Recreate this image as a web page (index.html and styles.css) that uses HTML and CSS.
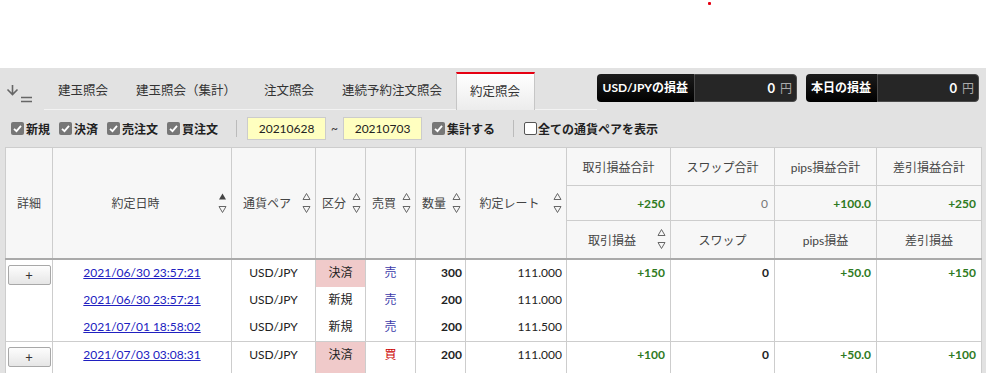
FILE: index.html
```html
<!DOCTYPE html>
<html lang="ja">
  <head>
    <meta charset="UTF-8" />
    <title>約定照会</title>
    <link rel="stylesheet" href="styles.css">
  </head>
  <body>
    <div class="top"><span class="dot"></span></div>

    <div class="panel">
      <div class="tabbar">
        <div class="dl-icon">
          <svg viewBox="0 0 28 20" width="28" height="20">
            <path d="M6.5 1 V10 M1.5 5.5 L6.5 10.5 L11.5 5.5" fill="none" stroke="#666" stroke-width="1.6" />
            <path d="M15 13.5 H26 M15 17.5 H26" stroke="#666" stroke-width="1.6" />
          </svg>
        </div>
        <div class="tabs">
          <div class="tab">建玉照会</div>
          <div class="tab">建玉照会（集計）</div>
          <div class="tab">注文照会</div>
          <div class="tab">連続予約注文照会</div>
          <div class="tab active">約定照会</div>
        </div>
        <div class="pnl">
          <div class="pnl-label">USD/JPYの損益</div>
          <div class="pnl-value pnl-wide"><b>0</b><span>円</span></div>
        </div>
        <div class="pnl">
          <div class="pnl-label">本日の損益</div>
          <div class="pnl-value"><b>0</b><span>円</span></div>
        </div>
      </div>

      <div class="filters">
        <label class="chk"><span class="cb on"><svg viewBox="0 0 13 13"><path d="M3 6.8 L5.5 9.2 L10 3.8" fill="none" stroke="#fff" stroke-width="1.8" /></svg></span>新規</label>
        <label class="chk"><span class="cb on"><svg viewBox="0 0 13 13"><path d="M3 6.8 L5.5 9.2 L10 3.8" fill="none" stroke="#fff" stroke-width="1.8" /></svg></span>決済</label>
        <label class="chk"><span class="cb on"><svg viewBox="0 0 13 13"><path d="M3 6.8 L5.5 9.2 L10 3.8" fill="none" stroke="#fff" stroke-width="1.8" /></svg></span>売注文</label>
        <label class="chk"><span class="cb on"><svg viewBox="0 0 13 13"><path d="M3 6.8 L5.5 9.2 L10 3.8" fill="none" stroke="#fff" stroke-width="1.8" /></svg></span>買注文</label>
        <span class="sep"></span>
        <div class="date">20210628</div>
        <span class="tilde">~</span>
        <div class="date">20210703</div>
        <label class="chk chk-sum"><span class="cb on"><svg viewBox="0 0 13 13"><path d="M3 6.8 L5.5 9.2 L10 3.8" fill="none" stroke="#fff" stroke-width="1.8" /></svg></span>集計する</label>
        <span class="sep"></span>
        <label class="chk chk-all"><span class="cb off"></span>全ての通貨ペアを表示</label>
      </div>

      <table class="grid">
        <colgroup>
          <col style="width:47px"><col style="width:179px"><col style="width:84px"><col style="width:50px">
          <col style="width:50px"><col style="width:50px"><col style="width:101px"><col style="width:104px">
          <col style="width:104px"><col style="width:102px"><col style="width:105px">
        </colgroup>
        <thead>
          <tr class="h1">
            <th rowspan="3">詳細</th>
            <th rowspan="3"><div class="sort"><span class="lbl">約定日時</span>
              <svg class="arr" viewBox="0 0 9 22"><polygon points="4.5,1.5 8,7.5 1,7.5" fill="#444" /><polygon points="1,14.5 8,14.5 4.5,20.5" fill="none" stroke="#666" /></svg></div></th>
            <th rowspan="3"><div class="sort"><span class="lbl">通貨ペア</span>
              <svg class="arr" viewBox="0 0 9 22"><polygon points="4.5,1.5 8,7.5 1,7.5" fill="none" stroke="#666" /><polygon points="1,14.5 8,14.5 4.5,20.5" fill="none" stroke="#666" /></svg></div></th>
            <th rowspan="3"><div class="sort"><span class="lbl">区分</span>
              <svg class="arr" viewBox="0 0 9 22"><polygon points="4.5,1.5 8,7.5 1,7.5" fill="none" stroke="#666" /><polygon points="1,14.5 8,14.5 4.5,20.5" fill="none" stroke="#666" /></svg></div></th>
            <th rowspan="3"><div class="sort"><span class="lbl">売買</span>
              <svg class="arr" viewBox="0 0 9 22"><polygon points="4.5,1.5 8,7.5 1,7.5" fill="none" stroke="#666" /><polygon points="1,14.5 8,14.5 4.5,20.5" fill="none" stroke="#666" /></svg></div></th>
            <th rowspan="3"><div class="sort"><span class="lbl">数量</span>
              <svg class="arr" viewBox="0 0 9 22"><polygon points="4.5,1.5 8,7.5 1,7.5" fill="none" stroke="#666" /><polygon points="1,14.5 8,14.5 4.5,20.5" fill="none" stroke="#666" /></svg></div></th>
            <th rowspan="3"><div class="sort"><span class="lbl">約定レート</span>
              <svg class="arr" viewBox="0 0 9 22"><polygon points="4.5,1.5 8,7.5 1,7.5" fill="none" stroke="#666" /><polygon points="1,14.5 8,14.5 4.5,20.5" fill="none" stroke="#666" /></svg></div></th>
            <th>取引損益合計</th>
            <th>スワップ合計</th>
            <th>pips損益合計</th>
            <th>差引損益合計</th>
          </tr>
          <tr class="h2">
            <th class="num plus">+250</th>
            <th class="num zero">0</th>
            <th class="num plus">+100.0</th>
            <th class="num plus">+250</th>
          </tr>
          <tr class="h3">
            <th><div class="sort"><span class="lbl">取引損益</span>
              <svg class="arr" viewBox="0 0 9 22"><polygon points="4.5,1.5 8,7.5 1,7.5" fill="none" stroke="#666" /><polygon points="1,14.5 8,14.5 4.5,20.5" fill="none" stroke="#666" /></svg></div></th>
            <th>スワップ</th>
            <th>pips損益</th>
            <th>差引損益</th>
          </tr>
        </thead>
        <tbody>
          <tr>
            <td rowspan="3" class="btn-cell"><button class="plus-btn">+</button></td>
            <td class="c"><a href="#">2021/06/30 23:57:21</a></td>
            <td class="c">USD/JPY</td>
            <td class="c kind-close">決済</td>
            <td class="c sell">売</td>
            <td class="r qty">300</td>
            <td class="r rate">111.000</td>
            <td rowspan="3" class="r pl plus">+150</td>
            <td rowspan="3" class="r pl">0</td>
            <td rowspan="3" class="r pl plus">+50.0</td>
            <td rowspan="3" class="r pl plus">+150</td>
          </tr>
          <tr>
            <td class="c"><a href="#">2021/06/30 23:57:21</a></td>
            <td class="c">USD/JPY</td>
            <td class="c">新規</td>
            <td class="c sell">売</td>
            <td class="r qty">200</td>
            <td class="r rate">111.000</td>
          </tr>
          <tr>
            <td class="c"><a href="#">2021/07/01 18:58:02</a></td>
            <td class="c">USD/JPY</td>
            <td class="c">新規</td>
            <td class="c sell">売</td>
            <td class="r qty">200</td>
            <td class="r rate">111.500</td>
          </tr>
        </tbody>
        <tbody>
          <tr>
            <td class="btn-cell"><button class="plus-btn">+</button></td>
            <td class="c"><a href="#">2021/07/03 03:08:31</a></td>
            <td class="c">USD/JPY</td>
            <td class="c kind-close">決済</td>
            <td class="c buy">買</td>
            <td class="r qty">200</td>
            <td class="r rate">111.000</td>
            <td class="r pl plus">+100</td>
            <td class="r pl">0</td>
            <td class="r pl plus">+50.0</td>
            <td class="r pl plus">+100</td>
          </tr>
        </tbody>
      </table>
    </div>
  </body>
</html>
```

FILE: styles.css
```css
body {
  margin: 0;
  font-family: Lato, "Noto Sans CJK JP", sans-serif;
  font-size: 12px;
  color: #333;
  background: #e2e2e2;
}

.top {
  height: 68px;
  background: #fff;
  padding-top: 2px;
  box-sizing: border-box;
}

.dot {
  display: block;
  width: 3px;
  height: 3px;
  margin-left: 708px;
  background: #e60012;
  border-radius: 1px;
}

.panel {
  background: #e2e2e2;
  height: 305px;
}

/* tab row */
.tabbar {
  display: flex;
  height: 42px;
}

.dl-icon {
  width: 44px;
  padding: 16px 0 0 6px;
  box-sizing: border-box;
}

.tabs {
  display: flex;
  align-items: flex-end;
  flex: 1;
  border-bottom: 1px solid #f3f3f3;
}

.tab {
  height: 37px;
  line-height: 37px;
  padding: 0 14px;
  font-size: 12.5px;
  color: #333;
  box-sizing: border-box;
}

.tab.active {
  padding: 0 14px 0 13px;
  background: linear-gradient(#fff, #ececec);
  border: 1px solid #c6c6c6;
  border-top: 2px solid #e60012;
  border-bottom: none;
  height: 38px;
  line-height: 35px;
  margin-bottom: -1px;
}

.pnl {
  display: flex;
  align-self: flex-start;
  height: 28px;
  margin: 6px 9px 0 0;
}

.pnl:last-child {
  margin-right: 7px;
}

.pnl-label {
  background: linear-gradient(#1c1c1c, #000);
  color: #fff;
  font-weight: bold;
  font-size: 12px;
  line-height: 28px;
  padding: 0 6px 0 5px;
  border-radius: 4px 0 0 4px;
}

.pnl-value {
  width: 102px;
  box-sizing: border-box;
  background: #262626;
  border: 1px solid #4a4a4a;
  border-radius: 0 4px 4px 0;
  text-align: right;
  line-height: 26px;
  padding-right: 4px;
  color: #fff;
}

.pnl-wide {
  width: 103px;
}

.pnl-value b {
  font-size: 13px;
}

.pnl-value span {
  color: #aaa;
  margin-left: 5px;
}

/* filter row */
.filters {
  display: flex;
  align-items: center;
  height: 37px;
  padding-left: 11px;
  gap: 9px;
}

.chk {
  display: flex;
  align-items: center;
  font-weight: bold;
  font-size: 12px;
  color: #222;
}

.cb {
  width: 13px;
  height: 13px;
  margin-right: 2px;
  border-radius: 2px;
  box-sizing: border-box;
}

.cb.on {
  background: #777;
}

.cb.on svg {
  display: block;
  width: 13px;
  height: 13px;
}

.cb.off {
  background: #fff;
  border: 1px solid #555;
}

.sep {
  width: 1px;
  height: 17px;
  background: #bbb;
  margin: 0 1px 0 9px;
}

.date {
  width: 79px;
  height: 23px;
  line-height: 21px;
  box-sizing: border-box;
  background: #ffffc0;
  border: 1px solid #ccc;
  text-align: center;
  font-size: 12px;
  color: #222;
}

.tilde {
  font-size: 12px;
  margin: 0 -4px;
}

.chk-sum {
  margin-left: 1px;
}

.chk-all .cb {
  margin-right: 1px;
}

/* grid */
.grid {
  margin-left: 5px;
  width: 976px;
  table-layout: fixed;
  border-collapse: collapse;
  background: #fff;
  border: 1px solid #bdbdbd;
}

.grid th {
  background: #f7f7f7;
  border: 1px solid #cdcdcd;
  font-weight: normal;
  color: #444;
  padding: 0;
}

.grid thead tr:first-child th[rowspan],
.grid thead tr.h3 th {
  border-bottom: 2px solid #aaa;
}

.grid tr.h1 { height: 38px; }
.grid tr.h2 { height: 35px; }
.grid tr.h3 { height: 38px; }

.sort {
  display: flex;
  align-items: center;
}

.sort .lbl {
  flex: 1;
  text-align: center;
}

.arr {
  flex: none;
  width: 9px;
  height: 22px;
  margin-right: 4px;
}

.grid th.num {
  text-align: right;
  padding-right: 5px;
  font-weight: bold;
}

.grid th.zero {
  font-weight: normal;
  color: #777;
  padding-right: 6px;
}

.grid tbody + tbody {
  border-top: 1px solid #cdcdcd;
}

.grid td {
  height: 27px;
  line-height: 26px;
  padding: 0;
  border-left: 1px solid #cdcdcd;
  border-right: 1px solid #cdcdcd;
  color: #222;
  vertical-align: top;
}

.grid td.c { text-align: center; }
.grid td.r { text-align: right; }

.grid td a {
  color: #2020c0;
  text-decoration: underline;
}

.kind-close {
  background: #f0caca;
}

.grid td.sell { color: #3c3caa; }
.grid td.buy { color: #cc0000; }

.qty {
  font-weight: bold;
  padding-right: 3px !important;
}

.rate {
  padding-right: 4px !important;
}

.pl {
  font-weight: bold;
  padding-right: 5px !important;
}

.plus { color: #2f7a22 !important; }

.btn-cell {
  text-align: center;
  padding-top: 4px !important;
}

.plus-btn {
  display: block;
  margin: 1px auto 0;
  width: 43px;
  height: 20px;
  padding: 0;
  background: linear-gradient(#fdfdfd, #e6e6e6);
  border: 1px solid #a8a8a8;
  border-radius: 2px;
  font-family: Lato, sans-serif;
  font-size: 13px;
  line-height: 16px;
  color: #333;
}
```
